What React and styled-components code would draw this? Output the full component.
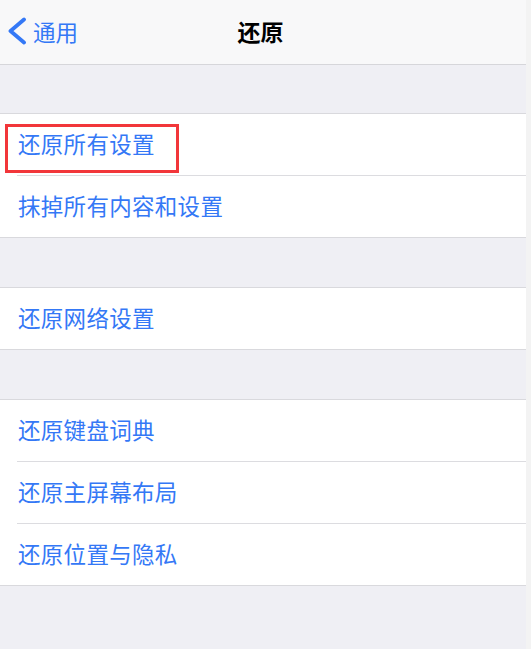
import styled, { createGlobalStyle } from 'styled-components';

const GlobalStyle = createGlobalStyle`
  html, body {
    margin: 0;
    padding: 0;
    background: #efeff4;
  }
  body {
    font-family: "Noto Sans CJK SC", "Noto Sans", sans-serif;
    -webkit-font-smoothing: antialiased;
  }
`;

const groups = [
  ['还原所有设置', '抹掉所有内容和设置'],
  ['还原网络设置'],
  ['还原键盘词典', '还原主屏幕布局', '还原位置与隐私'],
];

const App = () => {
  return (
    <>
      <GlobalStyle />
      <Page>
        <Main>
          <NavBar>
            <BackButton>
              <svg width="20" height="28" viewBox="0 0 20 28" fill="none">
                <path
                  d="M17 2.5 L3.5 14 L17 25.5"
                  stroke="#3478f6"
                  strokeWidth="3.8"
                  strokeLinecap="round"
                  strokeLinejoin="round"
                />
              </svg>
              <span>通用</span>
            </BackButton>
            <Title>还原</Title>
          </NavBar>
          {groups.map((items, gi) => (
            <Section key={gi}>
              <Gap first={gi === 0} />
              <Group>
                {items.map((label, i) => (
                  <Row key={label} last={i === items.length - 1}>
                    <RowLabel>{label}</RowLabel>
                    {gi === 0 && i === 0 && <Highlight />}
                  </Row>
                ))}
              </Group>
            </Section>
          ))}
        </Main>
        <EdgeStrip />
      </Page>
    </>
  );
};

const Page = styled.div`
  display: flex;
  width: 531px;
  min-height: 649px;
  background: #efeff4;
`;

const Main = styled.div`
  width: 526px;
  display: flex;
  flex-direction: column;
`;

const EdgeStrip = styled.div`
  flex: 1;
  background: #f3f3f3;
`;

const NavBar = styled.div`
  position: relative;
  height: 64px;
  background: #f8f8f9;
  border-bottom: 1px solid #d6d6da;
  display: flex;
  align-items: center;
  justify-content: center;
`;

const BackButton = styled.div`
  position: absolute;
  left: 7px;
  top: 0;
  bottom: 0;
  display: flex;
  align-items: center;
  gap: 6px;
  color: #3478f6;
  font-size: 22.5px;
  padding-bottom: 2px;

  span {
    line-height: 1;
  }
`;

const Title = styled.div`
  font-size: 23px;
  font-weight: 700;
  color: #000;
  line-height: 1;
  margin-right: 5px;
  padding-bottom: 2px;
`;

const Section = styled.div`
  display: flex;
  flex-direction: column;
`;

const Gap = styled.div`
  height: ${({ first }) => (first ? '48px' : '49px')};
  background: #efeff4;
`;

const Group = styled.div`
  background: #fff;
  border-top: 1px solid #d9d9dd;
  border-bottom: 1px solid #d9d9dd;
`;

const Row = styled.div`
  position: relative;
  height: 61px;
  display: flex;
  align-items: center;
  padding-left: 18px;
  box-sizing: border-box;

  &::after {
    content: '';
    display: ${({ last }) => (last ? 'none' : 'block')};
    position: absolute;
    left: 17px;
    right: 0;
    bottom: -1px;
    height: 1px;
    background: #dcdce0;
  }

  & + & {
    margin-top: 1px;
  }
`;

const RowLabel = styled.span`
  font-size: 22.5px;
  line-height: 1;
  color: #3478f6;
  letter-spacing: 0.3px;
  padding-bottom: 2px;
`;

const Highlight = styled.div`
  position: absolute;
  left: 5px;
  top: 10px;
  width: 174px;
  height: 49px;
  box-sizing: border-box;
  border: 3px solid #f2363a;
`;

export default App;
